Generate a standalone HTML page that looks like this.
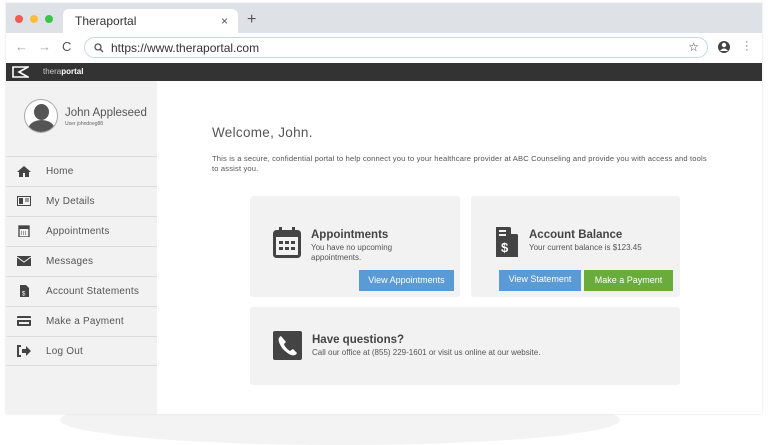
<!DOCTYPE html>
<html><head><meta charset="utf-8"><style>
*{box-sizing:border-box;margin:0;padding:0}
body{width:768px;height:436px;background:#fff;font-family:"Liberation Sans",sans-serif;position:relative;overflow:hidden;color:#555}
.abs{position:absolute}
.swoosh{left:60px;top:395px;width:560px;height:50px;background:#f3f3f3;border-radius:50%}
.win{left:6px;top:3px;width:756px;height:411px;background:#fff;box-shadow:0 0 2px #ddd}
.tabbar{left:6px;top:3px;width:756px;height:30px;background:#dee1e6}
.dot{width:8px;height:8px;border-radius:50%;top:15px}
.tab{left:63px;top:9px;width:175px;height:24px;background:#fff;border-radius:6px 6px 0 0;font-size:12px;color:#333;padding:5px 12px}
.addr{left:84px;top:37px;width:624px;height:21px;border:1px solid #c8d6ea;border-radius:11px;font-size:12px;color:#333;padding:3px 0 0 26px}
.dark{left:6px;top:63px;width:756px;height:18px;background:#333}
.side{left:6px;top:81px;width:151px;height:333px;background:#f2f2f2}
.item{left:6px;width:151px;height:30px;border-top:1px solid #dcdcdc;font-size:10px;color:#555;padding:9px 0 0 40px;letter-spacing:0.2px}
.ic{position:absolute;left:11px;top:8px;width:14px;height:12px}
.card{background:#f2f2f2;border-radius:3px}
.btn{color:#fff;font-size:9px;text-align:center;line-height:20px}
h3{font-size:11.5px;color:#444}
</style></head><body>
<div class="abs swoosh"></div>
<div class="abs win"></div>
<div class="abs tabbar"></div>
<div class="abs dot" style="left:15px;background:#f05b55"></div>
<div class="abs dot" style="left:30px;background:#f8be3a"></div>
<div class="abs dot" style="left:45px;background:#3ac54a"></div>
<div class="abs tab">Theraportal<span style="position:absolute;right:10px;top:5px;font-size:12px;color:#555">×</span></div>
<div class="abs" style="left:247px;top:11px;font-size:16px;color:#555">+</div>
<div class="abs" style="left:15px;top:39px;font-size:13px;color:#aaa">←</div>
<div class="abs" style="left:38px;top:39px;font-size:13px;color:#aaa">→</div>
<div class="abs" style="left:62px;top:39px;font-size:13px;color:#555">C</div>
<div class="abs addr">https://www.theraportal.com
<svg style="position:absolute;left:9px;top:5px" width="10" height="10"><circle cx="4" cy="4" r="3" fill="none" stroke="#555" stroke-width="1.3"/><path d="M6 6l3 3" stroke="#555" stroke-width="1.3"/></svg>
<span style="position:absolute;right:8px;top:2px;font-size:12px">☆</span></div>
<svg class="abs" style="left:717px;top:40px" width="14" height="14"><circle cx="7" cy="7" r="6" fill="#444"/><circle cx="7" cy="5" r="2.2" fill="#fff"/><path d="M3 11q4-5 8 0" fill="#fff"/></svg>
<div class="abs" style="left:745px;top:40px;font-size:11px;color:#555;line-height:4px">·<br>·<br>·</div>
<div class="abs dark"></div>
<svg class="abs" style="left:12px;top:66px" width="17" height="12"><path d="M1 1h15L7 6l9 5H1z" fill="none" stroke="#fff" stroke-width="1.6"/></svg>
<div class="abs" style="left:43px;top:67px;font-size:8px;color:#ccc">thera<b style="color:#fff">portal</b></div>
<div class="abs side"></div>
<div class="abs" style="left:24px;top:99px;width:34px;height:34px;border-radius:50%;border:1px solid #aaa;background:#fff;overflow:hidden">
<div style="position:absolute;left:9px;top:4px;width:15px;height:16px;border-radius:50%;background:#555"></div>
<div style="position:absolute;left:3px;top:20px;width:27px;height:20px;border-radius:50%;background:#555"></div></div>
<div class="abs" style="left:65px;top:107px;font-size:11.5px;color:#555">John Appleseed</div>
<div class="abs" style="left:65px;top:121px;font-size:5px;color:#666">User johndoeg88</div>
<div class="abs item" style="top:156px"><svg class="ic" viewBox="0 0 14 12"><path d="M7 1L0 7h2v5h4V8h2v4h4V7h2z" fill="#444"/></svg>Home</div>
<div class="abs item" style="top:186px"><svg class="ic" viewBox="0 0 14 12"><rect x="0.5" y="1.5" width="13" height="9" fill="none" stroke="#444"/><rect x="2" y="3" width="4" height="6" fill="#444"/><path d="M8 4h4M8 6h4" stroke="#444"/></svg>My Details</div>
<div class="abs item" style="top:216px"><svg class="ic" viewBox="0 0 14 12"><rect x="2" y="1" width="10" height="11" fill="none" stroke="#444" stroke-width="1.3"/><rect x="2" y="1" width="10" height="3" fill="#444"/><path d="M4 7h6M4 9h6" stroke="#444" stroke-dasharray="1 1"/></svg>Appointments</div>
<div class="abs item" style="top:246px"><svg class="ic" viewBox="0 0 14 12"><rect x="0" y="1" width="14" height="10" fill="#444"/><path d="M0 2l7 5 7-5" stroke="#f2f2f2" fill="none"/></svg>Messages</div>
<div class="abs item" style="top:276px"><svg class="ic" viewBox="0 0 14 12"><path d="M3 0h6l3 3v9H3z" fill="#444"/><text x="5" y="10.5" font-size="6" fill="#fff">$</text></svg>Account Statements</div>
<div class="abs item" style="top:306px"><svg class="ic" viewBox="0 0 14 12"><rect x="0" y="1" width="14" height="10" rx="1" fill="#444"/><rect x="0" y="3" width="14" height="2" fill="#f2f2f2"/><rect x="2" y="7" width="10" height="2" fill="#f2f2f2"/></svg>Make a Payment</div>
<div class="abs item" style="top:336px;border-bottom:1px solid #dcdcdc"><svg class="ic" viewBox="0 0 14 12"><path d="M4 1H1v10h3" stroke="#444" stroke-width="2" fill="none"/><path d="M5 4h4V1l5 5-5 5V8H5z" fill="#444"/></svg>Log Out</div>

<div class="abs" style="left:212px;top:125px;font-size:13.5px;color:#555;letter-spacing:0.3px">Welcome, John.</div>
<div class="abs" style="left:212px;top:154px;width:500px;font-size:7.6px;line-height:10px;color:#555;letter-spacing:0.15px">This is a secure, confidential portal to help connect you to your healthcare provider at ABC Counseling and provide you with access and tools to assist you.</div>

<div class="abs card" style="left:250px;top:196px;width:210px;height:101px"></div>
<svg class="abs" style="left:273px;top:227px" width="28" height="32" viewBox="0 0 28 32"><rect x="1.5" y="4.5" width="25" height="25" rx="2" fill="none" stroke="#444" stroke-width="3"/><rect x="1" y="4" width="26" height="6" fill="#444"/><rect x="6" y="0" width="3" height="7" fill="#444"/><rect x="19" y="0" width="3" height="7" fill="#444"/><g fill="#444"><rect x="6" y="14" width="4" height="3"/><rect x="12" y="14" width="4" height="3"/><rect x="18" y="14" width="4" height="3"/><rect x="6" y="20" width="4" height="3"/><rect x="12" y="20" width="4" height="3"/><rect x="18" y="20" width="4" height="3"/></g></svg>
<h3 class="abs" style="left:311px;top:229px">Appointments</h3>
<div class="abs" style="left:311px;top:243px;font-size:8px;line-height:9.5px;width:100px">You have no upcoming appointments.</div>
<div class="abs btn" style="left:359px;top:270px;width:95px;height:21px;background:#5b9bd5">View Appointments</div>

<div class="abs card" style="left:471px;top:196px;width:209px;height:101px"></div>
<svg class="abs" style="left:496px;top:227px" width="22" height="30" viewBox="0 0 22 30"><path d="M0 0h14l8 8v22H0z" fill="#444"/><path d="M15 0v7h7" fill="#f2f2f2"/><path d="M3 4h7M3 8h7" stroke="#f2f2f2" stroke-width="2"/><text x="5" y="25" font-size="13" font-weight="bold" fill="#fff" font-family="Liberation Sans">$</text></svg>
<h3 class="abs" style="left:529px;top:229px">Account Balance</h3>
<div class="abs" style="left:529px;top:243px;font-size:8px">Your current balance is $123.45</div>
<div class="abs btn" style="left:499px;top:270px;width:82px;height:21px;background:#5b9bd5;line-height:18px">View Statement</div>
<div class="abs btn" style="left:584px;top:270px;width:89px;height:21px;background:#6aac3c">Make a Payment</div>

<div class="abs card" style="left:250px;top:307px;width:430px;height:78px"></div>
<svg class="abs" style="left:273px;top:331px" width="29" height="29" viewBox="0 0 29 29"><rect width="29" height="29" rx="2" fill="#444"/><path d="M8 5c-2 1-3 3-2 6 2 6 6 10 12 13 3 1 5 0 6-2l-4-4-3 2c-3-2-5-4-6-7l2-2z" fill="#fff"/></svg>
<h3 class="abs" style="left:312px;top:334px">Have questions?</h3>
<div class="abs" style="left:312px;top:348px;font-size:8px">Call our office at (855) 229-1601  or visit us online at our website.</div>
</body></html>
